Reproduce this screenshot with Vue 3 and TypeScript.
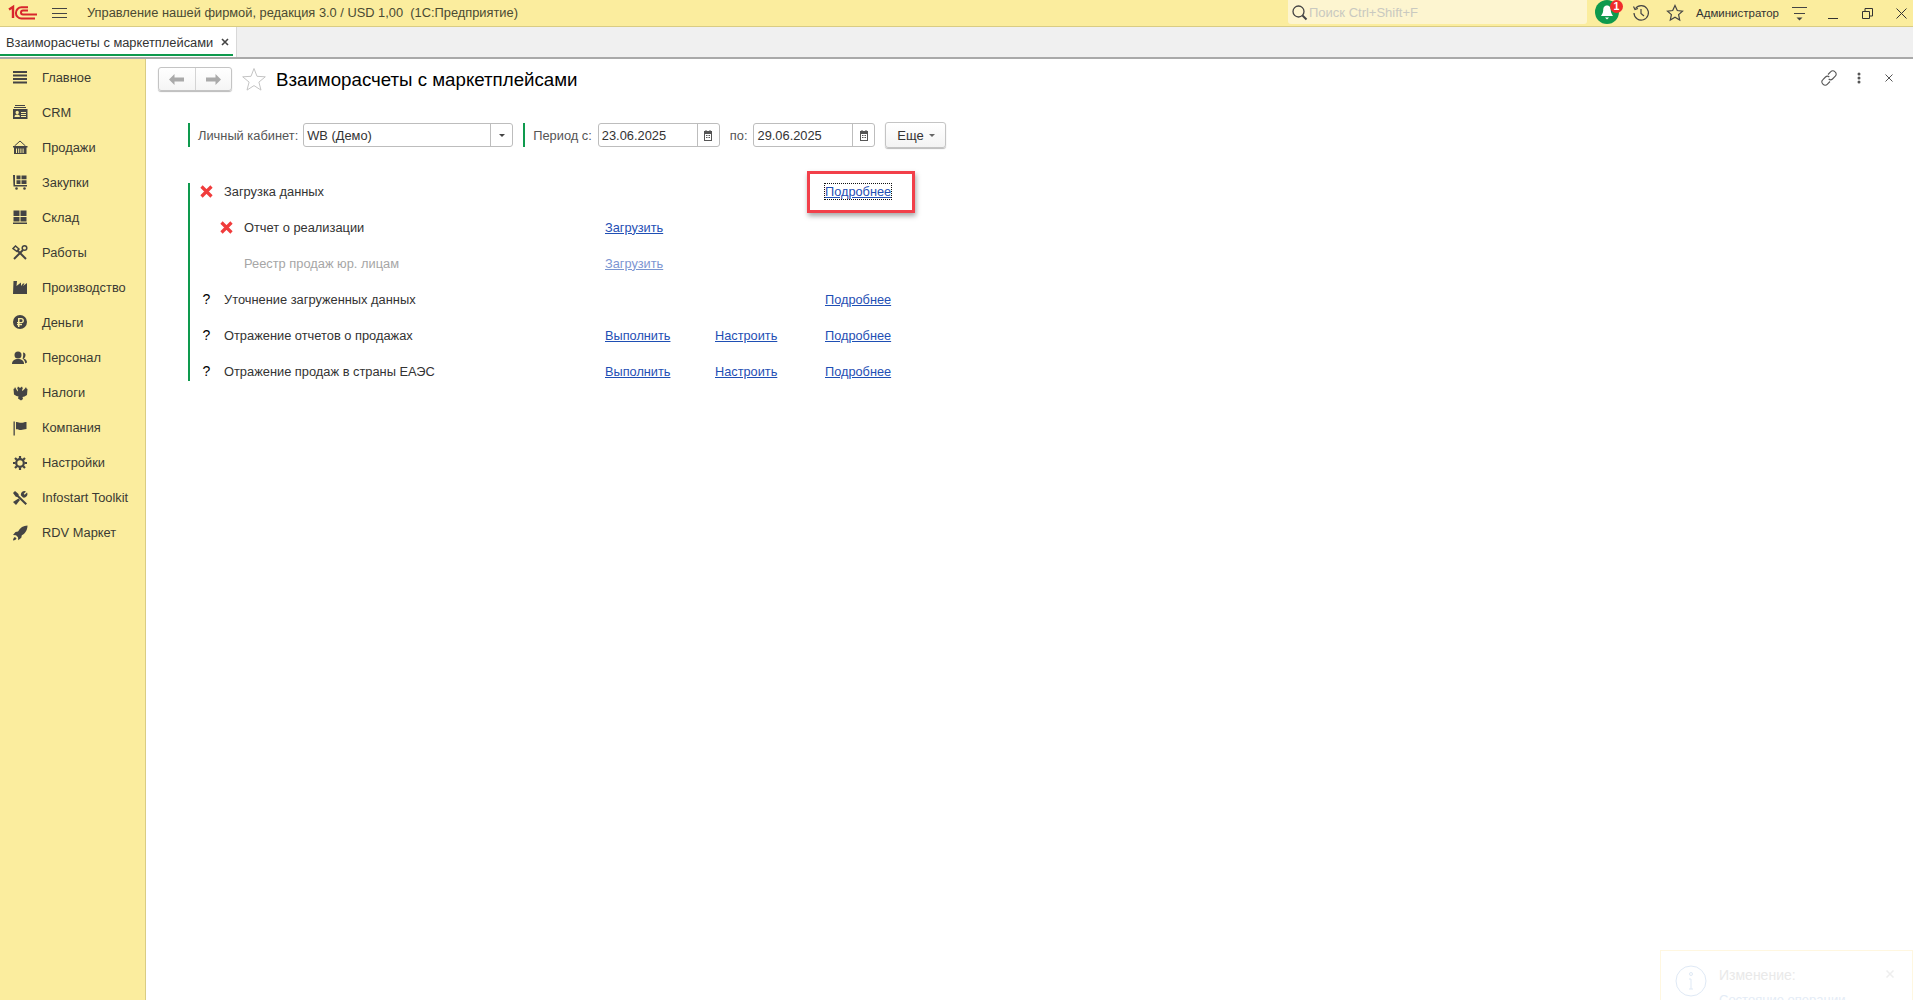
<script setup lang="ts">
const menu: { label: string; icon: string }[] = [
  { label: 'Главное', icon: 'home' },
  { label: 'CRM', icon: 'crm' },
  { label: 'Продажи', icon: 'basket' },
  { label: 'Закупки', icon: 'cart' },
  { label: 'Склад', icon: 'stock' },
  { label: 'Работы', icon: 'scissors' },
  { label: 'Производство', icon: 'factory' },
  { label: 'Деньги', icon: 'money' },
  { label: 'Персонал', icon: 'people' },
  { label: 'Налоги', icon: 'eagle' },
  { label: 'Компания', icon: 'flag' },
  { label: 'Настройки', icon: 'gear' },
  { label: 'Infostart Toolkit', icon: 'tools' },
  { label: 'RDV Маркет', icon: 'rocket' }
]

interface Row {
  label: string
  state: 'error' | 'question' | 'none'
  sub?: boolean
  muted?: boolean
  first?: string
  second?: string
  third?: string
  focused?: boolean
}

const rows: Row[] = [
  { label: 'Загрузка данных', state: 'error', third: 'Подробнее', focused: true },
  { label: 'Отчет о реализации', state: 'error', sub: true, first: 'Загрузить' },
  { label: 'Реестр продаж юр. лицам', state: 'none', sub: true, muted: true, first: 'Загрузить' },
  { label: 'Уточнение загруженных данных', state: 'question', third: 'Подробнее' },
  { label: 'Отражение отчетов о продажах', state: 'question', first: 'Выполнить', second: 'Настроить', third: 'Подробнее' },
  { label: 'Отражение продаж в страны ЕАЭС', state: 'question', first: 'Выполнить', second: 'Настроить', third: 'Подробнее' }
]
</script>

<template>
  <div class="app">
    <header class="topbar">
      <svg class="logo" width="30" height="18" viewBox="0 0 30 18" fill="none" stroke="#d8262c">
        <path d="M1 5.500 5 3v11" stroke-width="2.400" />
        <path d="M27 14.500H13.500a5.600 5.600 0 0 1 0-11.200H20" stroke-width="2" />
        <path d="M29 10.500H15a2 2 0 0 1 0-4h5" stroke-width="2" />
      </svg>
      <svg class="burger" width="15" height="12" viewBox="0 0 15 12" stroke="#444" stroke-width="1">
        <path d="M0 1.500h15M0 6.500h15M0 10.500h15" />
      </svg>
      <span class="app-title">Управление нашей фирмой, редакция 3.0 / USD 1,00&nbsp; (1С:Предприятие)</span>
      <div class="search">
        <svg width="17" height="17" viewBox="0 0 17 17" fill="none" stroke="#444">
          <circle cx="7.500" cy="7.500" r="5.500" stroke-width="1.300" />
          <path d="m11.500 11.500 4 4" stroke-width="2" />
        </svg>
        <span>Поиск Ctrl+Shift+F</span>
      </div>
      <div class="bell">
        <svg width="24" height="24" viewBox="0 0 24 24">
          <circle cx="12" cy="12" r="12" fill="#0e9a4d" />
          <path d="M12 5.500c-3 0-3.800 2.500-3.800 5 0 2.500-1.700 4.500-2.200 5.500h12c-.5-1-2.200-3-2.200-5.500 0-2.500-.8-5-3.800-5Z" fill="#fff" />
          <path d="M10 17.500h4l-2 2Z" fill="#fff" />
        </svg>
        <span class="badge">1</span>
      </div>
      <svg class="ti history" width="18" height="18" viewBox="0 0 18 18" fill="none" stroke="#444" stroke-width="1.200">
        <path d="M3.500 4.500A7.200 7.200 0 1 1 2 9" />
        <path d="M1.500 2.500 3 5.500l3-1" />
        <path d="M9 5v4.500l3 2.500" />
      </svg>
      <svg class="ti star" width="18" height="18" viewBox="0 0 18 18" fill="none" stroke="#444" stroke-width="1.200">
        <path d="m9 1.500 2.300 5 5.200.6-3.900 3.500 1.100 5.400L9 13.300 4.300 16l1.100-5.400L1.500 7.100l5.200-.6Z" />
      </svg>
      <span class="user">Администратор</span>
      <svg class="ti panel" width="15" height="16" viewBox="0 0 15 16" stroke="#444" fill="#444">
        <path d="M0 2.500h15M2 8.500h11" fill="none" />
        <path d="M4.500 12.500h6l-3 3Z" stroke="none" />
      </svg>
      <svg class="ti minimize" width="10" height="10" viewBox="0 0 10 10" stroke="#333"><path d="M0 9.500h10" /></svg>
      <svg class="ti restore" width="11" height="11" viewBox="0 0 11 11" fill="none" stroke="#333">
        <path d="M.5 3.500h7v7h-7Z" /><path d="M3 3V.5h7.500V8H8" />
      </svg>
      <svg class="ti closewin" width="11" height="11" viewBox="0 0 11 11" stroke="#333"><path d="m.5.500 10 10M10.500.500l-10 10" /></svg>
    </header>

    <div class="tabs">
      <div class="tab">
        <span>Взаиморасчеты с маркетплейсами</span>
        <svg width="8" height="8" viewBox="0 0 8 8" stroke="#444" stroke-width="1.600"><path d="m1 1 6 6M7 1 1 7" /></svg>
      </div>
    </div>

    <div class="body">
      <aside class="side">
        <div v-for="item in menu" :key="item.label" class="side-item">
          <svg class="side-icon" width="16" height="16" viewBox="0 0 16 16" fill="#444">
            <template v-if="item.icon === 'home'">
              <path d="M1 2h14v2H1zM1 5.500h14v2H1zM1 9h14v2H1zM1 12.500h14v2H1z" />
            </template>
            <template v-else-if="item.icon === 'crm'">
              <path d="M3 1h10v1H3zM2 3h12v1H2z" />
              <path fill-rule="evenodd" d="M1 5h14.500v10H1Zm4.200 1.800a1.700 1.700 0 1 0 0 3.400 1.700 1.700 0 0 0 0-3.400ZM2.500 13h5.400c0-1.800-1.200-2.500-2.700-2.500S2.500 11.200 2.500 13ZM9 8v1h5V8Zm0 2v1h5v-1Zm0 2v1h5v-1Z" />
            </template>
            <template v-else-if="item.icon === 'basket'">
              <path d="M2.500 7 8 2l5.500 5" fill="none" stroke="#444" stroke-width="1" />
              <path fill-rule="evenodd" d="M1 7h14.500v1.500H14.500V15H2V8.500H1Zm3 2.500V14h1V9.500Zm2.200 0V14h1V9.500Zm2.200 0V14h1V9.500Zm2.200 0V14h1V9.500Z" />
            </template>
            <template v-else-if="item.icon === 'cart'">
              <path d="M1 1h2v10h12v1.500H1.500Z" />
              <path d="M4.500 1.500h4v3.700h-4zM9.500 1.500h5v3.700h-5zM4.500 6.200h4v3.700h-4zM9.500 6.200h5v3.700h-5z" />
              <circle cx="4.500" cy="14.500" r="1.300" /><circle cx="12.500" cy="14.500" r="1.300" />
            </template>
            <template v-else-if="item.icon === 'stock'">
              <path d="M1.500 1.500h6v5.500h-6zM8.500 1.500h6v5.500h-6zM1.500 8h6v4.500h-6zM8.500 8h6v4.500h-6zM1 13.500h14V15H1z" />
            </template>
            <template v-else-if="item.icon === 'scissors'">
              <g fill="none" stroke="#444">
                <path d="M2 15 11 6" stroke-width="2" />
                <path d="M14 15 5 6" stroke-width="2" />
                <path d="M1 4.500 3.500 2 7 5 5 7.500Z" stroke-width="1.500" />
                <circle cx="12.500" cy="4" r="2.300" stroke-width="1.500" />
              </g>
            </template>
            <template v-else-if="item.icon === 'factory'">
              <path d="M1.500 2H5l-.5 5L9 3.500V7l2-2.500h1.500L11 7l4-3v11H1Z" />
            </template>
            <template v-else-if="item.icon === 'money'">
              <path fill-rule="evenodd" d="M8 1a7 7 0 1 1 0 14A7 7 0 0 1 8 1ZM6 4v4H5v1.200h1V10H5v1.200h1V13h1.500v-1.800H10V10H7.500v-.8h1.800a2.600 2.600 0 0 0 0-5.200Zm1.500 1.300h1.700a1.300 1.300 0 0 1 0 2.700H7.500Z" />
            </template>
            <template v-else-if="item.icon === 'people'">
              <circle cx="6" cy="5" r="3.500" />
              <path d="M0 14c0-3.500 2.500-5 6-5s6 1.500 6 5Z" />
              <path d="M11 2.500c1.500 0 2.500 1 2.500 2.500s-.7 3-2 3.500c1.800.5 3.500 1.500 3.500 4l-1.800 1c0-2-1-3.800-2.700-5 .7-1.200 1-3.500.5-6Z" />
            </template>
            <template v-else-if="item.icon === 'eagle'">
              <path d="M6 1.500 8 3l2-1.500.8 2L10 5l.5 1L13 3.500 14 2l.5 1.500 1 .5-.5 6-2.500 1.500-2 .5.500 2-2 1.500L6 13.500l.5-2-2-.5L2 9.500 1.500 4l1-.5L3 2l2.500 4.500L6 5l-.8-1.500Z" />
            </template>
            <template v-else-if="item.icon === 'flag'">
              <path d="M1.500 1.500h1.300v14H1.500zM4 2c2-.5 3 .8 5 .8s3.200-.8 5.500-.8v7c-2.300 0-3.500 1-5.500 1S6 9 4 9.300Z" />
            </template>
            <template v-else-if="item.icon === 'gear'">
              <g fill="none" stroke="#444">
                <circle cx="8" cy="8" r="3.800" stroke-width="2.200" />
                <path d="M8 1v2.500M8 12.500V15M1 8h2.500M12.500 8H15M3 3l1.800 1.800M11.200 11.200 13 13M13 3l-1.800 1.800M4.800 11.200 3 13" stroke-width="2.200" />
              </g>
            </template>
            <template v-else-if="item.icon === 'tools'">
              <path d="m1 3 2-2 3.500 3 .2 1.500L15 13.500 13.500 15 5.300 7 3.800 6.700Z" />
              <path d="M9 5.500a3.500 3.500 0 0 1 5-4l-2.300 2.300 1 1L15 2.500a3.500 3.500 0 0 1-4 5Z" />
              <path d="M6.500 8.500 8 10l-4 5-3-3Z" />
            </template>
            <template v-else>
              <path d="M15.500.500c-4 0-7.500 2-9.500 6L3.500 7l-2.500 3 3 .3L6 12.300l.3 3 3-2.500.5-2.500c4-2 5.700-6 5.700-9.800Z" />
              <path d="M3 12c-1.300.5-2 2-2 3.500 1.500 0 3-.7 3.500-2Z" />
            </template>
          </svg>
          <span>{{ item.label }}</span>
        </div>
      </aside>

      <main class="main">
        <div class="head">
          <div class="nav-btns">
            <button class="nav-btn" type="button">
              <svg width="15" height="11" viewBox="0 0 15 11" fill="#aaa"><path d="M0 5.500 5.500 0v3.500H15v4H5.500V11Z" /></svg>
            </button>
            <button class="nav-btn" type="button">
              <svg width="15" height="11" viewBox="0 0 15 11" fill="#aaa"><path d="M15 5.500 9.500 0v3.500H0v4h9.500V11Z" /></svg>
            </button>
          </div>
          <svg class="fav" width="24" height="24" viewBox="0 0 24 24" fill="none" stroke="#c4c4c4">
            <path d="m12 1.500 3 7.800 8.300.5-6.400 5.300 2.100 8-7-4.500-7 4.500 2.100-8L.7 9.800 9 9.300Z" />
          </svg>
          <h1>Взаиморасчеты с маркетплейсами</h1>
          <div class="head-tools">
            <svg width="16" height="16" viewBox="0 0 16 16" fill="none" stroke="#555" stroke-width="1.100">
              <path d="M7 4.500 9.800 1.700a2.700 2.700 0 0 1 4 0l.5.500a2.700 2.700 0 0 1 0 4L11.500 9a2.700 2.700 0 0 1-3.800 0" />
              <path d="M9 11.500 6.200 14.300a2.700 2.700 0 0 1-4 0l-.5-.5a2.700 2.700 0 0 1 0-4L4.500 7a2.700 2.700 0 0 1 3.800 0" />
            </svg>
            <svg class="dots" width="4" height="12" viewBox="0 0 4 12" fill="#555">
              <circle cx="2" cy="2" r="1.500" /><circle cx="2" cy="6" r="1.500" /><circle cx="2" cy="10" r="1.500" />
            </svg>
            <svg class="head-close" width="8" height="8" viewBox="0 0 8 8" stroke="#555"><path d="m.5.500 7 7M7.500.500l-7 7" /></svg>
          </div>
        </div>

        <div class="filters">
          <div class="group">
            <label>Личный кабинет:</label>
            <div class="field select">
              <span class="value">WB (Демо)</span>
              <span class="addon"><i class="caret" /></span>
            </div>
          </div>
          <div class="group period">
            <label class="from">Период с:</label>
            <div class="field date">
              <span class="value">23.06.2025</span>
              <span class="addon">
                <svg width="10" height="11" viewBox="0 0 10 11" fill="#555"><path fill-rule="evenodd" d="M1 1h1.500V0h1v1h3V0h1v1H9v10H1ZM2 4v6h6V4Z" /><path d="M3 5h1v1H3zM4.500 5h1v1h-1zM6 5h1v1H6zM3 7h1v1H3zM4.500 7h1v1h-1zM6 7h1v1H6z" /></svg>
              </span>
            </div>
            <label class="to">по:</label>
            <div class="field date">
              <span class="value">29.06.2025</span>
              <span class="addon">
                <svg width="10" height="11" viewBox="0 0 10 11" fill="#555"><path fill-rule="evenodd" d="M1 1h1.500V0h1v1h3V0h1v1H9v10H1ZM2 4v6h6V4Z" /><path d="M3 5h1v1H3zM4.500 5h1v1h-1zM6 5h1v1H6zM3 7h1v1H3zM4.500 7h1v1h-1zM6 7h1v1H6z" /></svg>
              </span>
            </div>
          </div>
          <button class="more" type="button">Еще <i class="caret grey" /></button>
        </div>

        <section class="steps">
          <div v-for="row in rows" :key="row.label" class="step" :class="{ muted: row.muted }">
            <div class="step-name" :class="{ sub: row.sub }">
              <svg v-if="row.state === 'error'" class="state" width="13" height="13" viewBox="0 0 13 13" stroke="#f03c3c" stroke-width="3.200">
                <path d="m1.500 1.500 10 10M11.500 1.500l-10 10" />
              </svg>
              <span v-else-if="row.state === 'question'" class="state q">?</span>
              <span v-else class="state" />
              <span>{{ row.label }}</span>
            </div>
            <span class="cell"><a v-if="row.first" href="#">{{ row.first }}</a></span>
            <span class="cell"><a v-if="row.second" href="#">{{ row.second }}</a></span>
            <span class="cell">
              <a v-if="row.third" href="#" :class="{ focused: row.focused }">{{ row.third }}</a>
              <span v-if="row.focused" class="callout" />
            </span>
          </div>
        </section>
      </main>
    </div>

    <div class="toast">
      <svg width="32" height="32" viewBox="0 0 32 32" fill="none" stroke="#dfe9f5">
        <circle cx="16" cy="16" r="15" />
        <path d="M16 14v10M14 14h2M14 24h4" />
        <circle cx="16" cy="9" r="1.500" />
      </svg>
      <div class="toast-text">
        <div class="toast-title">Изменение:</div>
        <div class="toast-sub">Состояние операции</div>
      </div>
      <svg class="toast-x" width="8" height="8" viewBox="0 0 8 8" stroke="#eee" stroke-width="1.500"><path d="m.5.500 7 7M7.500.500l-7 7" /></svg>
    </div>
  </div>
</template>

<style scoped>
.app {
  position: relative;
  width: 1913px;
  height: 1000px;
  overflow: hidden;
  display: flex;
  flex-direction: column;
  background: #fff;
  font-family: "Liberation Sans", Arial, sans-serif;
  font-size: 12.850px;
  color: #333;
}
.topbar {
  height: 27px;
  flex: none;
  box-sizing: border-box;
  display: flex;
  align-items: center;
  background: #fbed9e;
  border-bottom: 1px solid #d9cc84;
  padding-left: 8px;
}
.logo { margin-right: 14px; }
.burger { margin-right: 20px; }
.app-title {
  font-size: 12.850px;
  color: #4a4a33;
  width: 1201px;
  margin-top: -2px;
  white-space: nowrap;
}
.search {
  width: 299px;
  height: 24px;
  margin-top: -2px;
  box-sizing: border-box;
  background: #fdf5d0;
  border-radius: 0 0 3px 3px;
  display: flex;
  align-items: center;
  gap: 1px;
  padding-left: 3px;
  color: #c9c9c0;
  font-size: 13px;
}
.bell { position: relative; width: 24px; height: 24px; margin-left: 8px; margin-top: -2px; }
.bell svg { display: block; }
.badge {
  position: absolute;
  top: 0;
  right: -4px;
  width: 13px;
  height: 13px;
  border-radius: 50%;
  background: #f02b2b;
  color: #fff;
  font-size: 10.500px;
  font-weight: 700;
  line-height: 13px;
  text-align: center;
}
.ti { flex: none; }
.history { margin-left: 13px; }
.star { margin-left: 16px; }
.user { margin-left: 12px; width: 82px; font-size: 11.500px; color: #333; white-space: nowrap; }
.panel { margin-left: 14px; }
.minimize { margin-left: 21px; margin-top: 2px; }
.restore { margin-left: 24px; }
.closewin { margin-left: 23px; }

.tabs {
  height: 32px;
  flex: none;
  box-sizing: border-box;
  background: #f0f0f0;
  border-bottom: 2px solid #a9a9a9;
}
.tab {
  width: 237px;
  height: 30px;
  box-sizing: border-box;
  background: #fff;
  border-right: 1px solid #d8d8d8;
  display: flex;
  align-items: center;
  gap: 8px;
  padding: 0 0 0 6px;
  position: relative;
  white-space: nowrap;
  color: #333;
}
.tab::after {
  content: "";
  position: absolute;
  left: 0;
  right: 3px;
  bottom: 1px;
  height: 2px;
  background: #0e9a4d;
}

.body { flex: 1; display: flex; min-height: 0; }
.side {
  width: 146px;
  flex: none;
  box-sizing: border-box;
  background: #fbed9e;
  border-right: 1px solid #d9cc84;
  padding-top: 0.500px;
}
.side-item {
  height: 35.070px;
  display: flex;
  align-items: center;
  gap: 14px;
  padding-left: 12px;
  color: #3a3a33;
}
.side-icon { flex: none; }

.main { flex: 1; min-width: 0; position: relative; }
.head {
  display: flex;
  align-items: center;
  height: 24px;
  margin: 8px 0 0 12px;
}
.nav-btns {
  display: flex;
  width: 74px;
  height: 24px;
  box-sizing: border-box;
  border: 1px solid #c4c4c4;
  border-radius: 3px;
  box-shadow: 0 1px 1px #bbb;
  background: linear-gradient(#fff, #f5f5f5);
}
.nav-btn {
  flex: 1;
  padding: 0;
  border: 0;
  background: none;
  display: flex;
  align-items: center;
  justify-content: center;
}
.nav-btn + .nav-btn { border-left: 1px solid #d4d4d4; }
.fav { margin-left: 10px; }
h1 {
  margin: 0 0 0 10px;
  padding-top: 1px;
  font-size: 18.700px;
  font-weight: 400;
  color: #000;
}
.head-tools {
  margin-left: auto;
  display: flex;
  align-items: center;
  margin-right: 20px;
  margin-top: -2px;
}
.dots { margin-left: 20px; }
.head-close { margin-left: 24px; }

.filters {
  display: flex;
  align-items: center;
  margin: 32px 0 0 42px;
  height: 24px;
  gap: 10px;
}
.group {
  display: flex;
  align-items: center;
  height: 24px;
  border-left: 2px solid #0e9a4d;
  padding-left: 8px;
  gap: 5px;
}
label { color: #555; white-space: nowrap; padding-top: 1px; }
.from { margin-right: 1px; }
.to { margin-left: 5px; margin-right: 1px; }
.field {
  height: 24px;
  box-sizing: border-box;
  border: 1px solid #bdbdbd;
  border-radius: 3px;
  display: flex;
  align-items: center;
  background: #fff;
  color: #333;
}
.select { width: 210px; }
.date { width: 122px; }
.value { flex: 1; padding: 1px 0 0 3px; white-space: nowrap; }
.addon {
  width: 21px;
  height: 100%;
  border-left: 1px solid #bdbdbd;
  display: flex;
  align-items: center;
  justify-content: center;
}
.caret {
  display: block;
  width: 0;
  height: 0;
  border: 3px solid transparent;
  border-top: 3px solid #444;
  border-bottom: 0;
}
.caret.grey { border-top-color: #666; }
.more {
  width: 61px;
  height: 26px;
  box-sizing: border-box;
  border: 1px solid #c4c4c4;
  border-radius: 3px;
  background: linear-gradient(#fff, #f3f3f3);
  box-shadow: 0 1px 1px #bbb;
  font: 13px "Liberation Sans", Arial, sans-serif;
  color: #333;
  display: flex;
  align-items: center;
  justify-content: center;
  gap: 5px;
  padding: 0;
}

.steps {
  margin: 36px 0 0 42px;
  border-left: 2px solid #0e9a4d;
  width: 800px;
  display: flex;
  flex-direction: column;
  gap: 18px;
}
.step {
  display: grid;
  grid-template-columns: 415px 110px 110px 1fr;
  grid-template-rows: 18px;
  align-items: center;
  height: 18px;
}
.step-name {
  display: flex;
  align-items: center;
  padding-left: 10px;
  gap: 11px;
  color: #333;
  margin-bottom: 2px;
}
.step-name.sub { padding-left: 30px; }
.state { width: 13px; flex: none; }
.q { text-align: center; color: #000; font-size: 14px; }
.muted .step-name { color: #a6a6a6; }
.muted a { opacity: 0.6; }
.cell { position: relative; display: flex; align-items: center; height: 16px; margin-bottom: 2px; }
a { color: #1f4fb4; text-decoration: underline; font-size: 12.750px; }
.focused { outline: 1px dotted #111; outline-offset: 0; }
.callout {
  position: absolute;
  left: -18px;
  top: -12px;
  width: 108px;
  height: 42px;
  box-sizing: border-box;
  border: 3px solid #f2404a;
  box-shadow: 1px 3px 5px rgba(0, 0, 0, 0.35);
  pointer-events: none;
}

.toast {
  position: absolute;
  left: 1660px;
  top: 950px;
  width: 253px;
  height: 70px;
  box-sizing: border-box;
  border: 1px solid #fff7e0;
  display: flex;
  gap: 12px;
  padding: 14px 0 0 14px;
  background: #fff;
}
.toast-text { color: #e9e9e9; }
.toast-title { font-size: 14px; margin-top: 2px; }
.toast-sub { font-size: 13px; margin-top: 9px; color: #e4ecf6; }
.toast-x { position: absolute; right: 18px; top: 19px; }
</style>
